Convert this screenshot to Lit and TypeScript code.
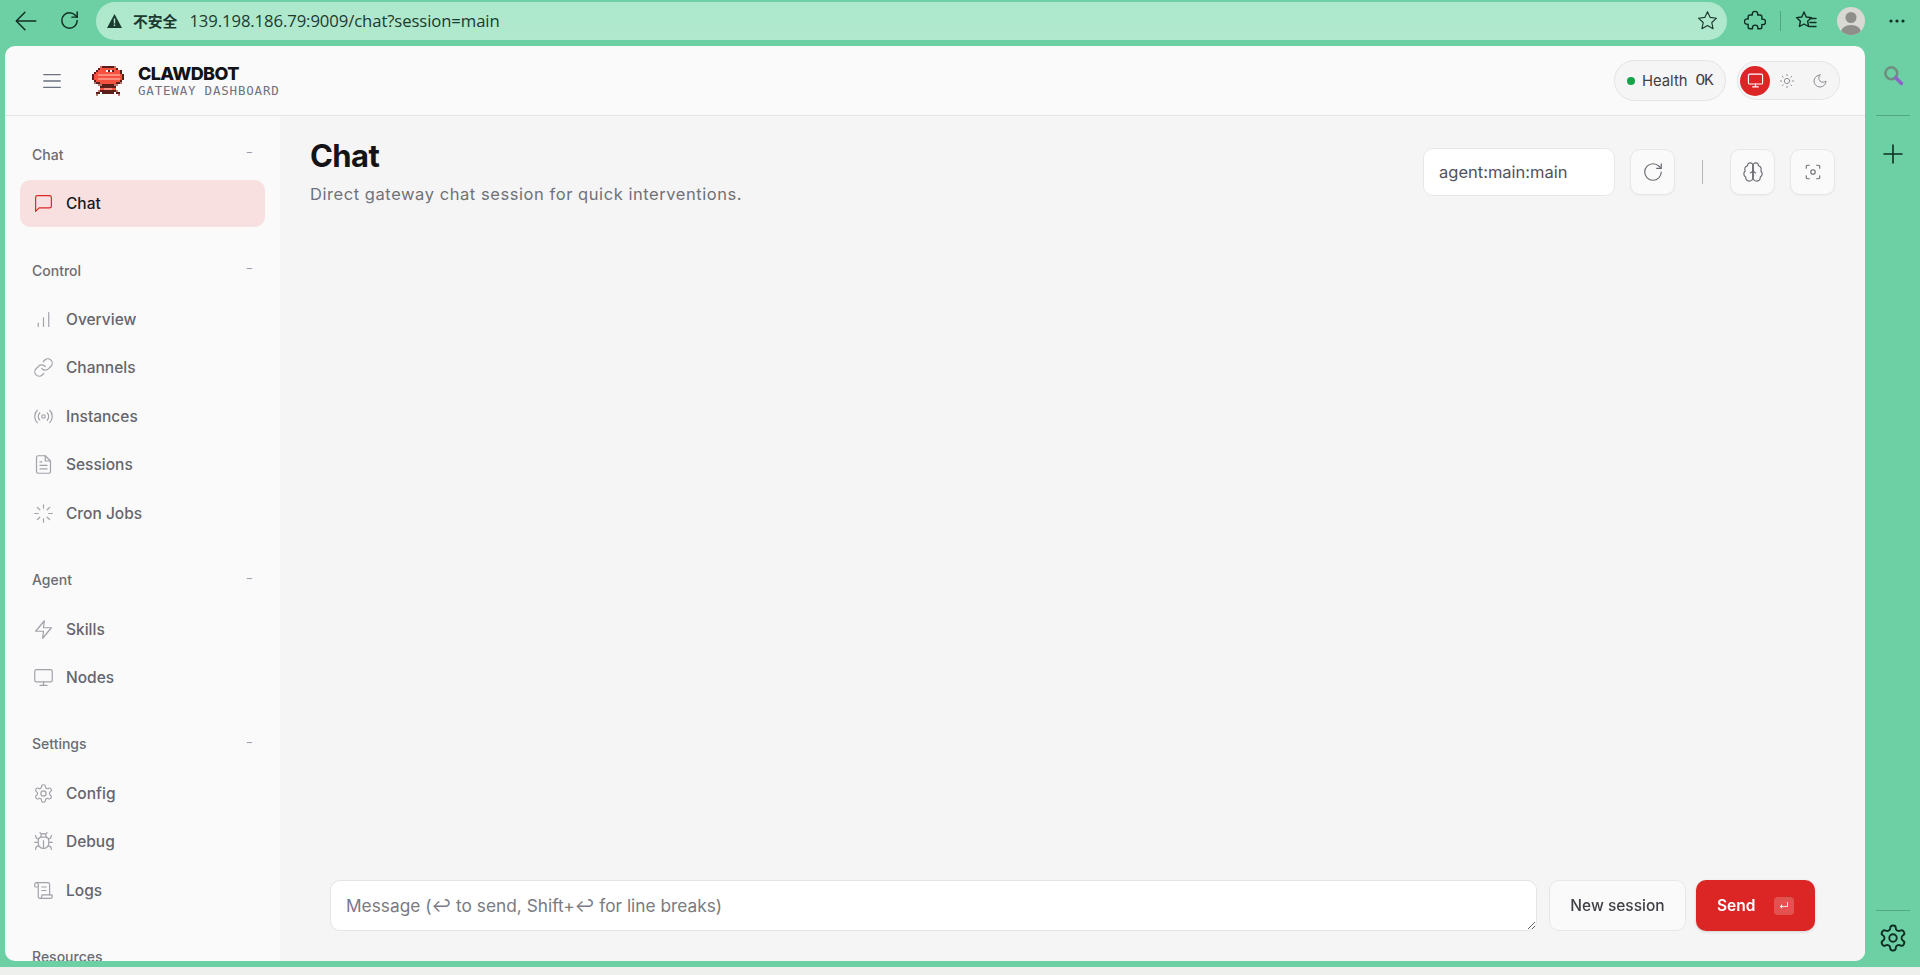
import { LitElement, html, css, svg } from "lit";
import { customElement } from "lit/decorators.js";

const ic = (body: unknown, size = 20, sw = 1.5) => html`<svg class="ic" width=${size} height=${size} viewBox="0 0 24 24" fill="none" stroke="currentColor" stroke-width=${sw} stroke-linecap="round" stroke-linejoin="round">${body}</svg>`;

const I: Record<string, unknown> = {
  chat: svg`<path d="M21 15a2 2 0 0 1-2 2H7l-4 4V5a2 2 0 0 1 2-2h14a2 2 0 0 1 2 2z"/>`,
  overview: svg`<path d="M18 20V4M12 20V10M6 20v-4"/>`,
  channels: svg`<path d="M10 13a5 5 0 0 0 7.54.54l3-3a5 5 0 0 0-7.07-7.07l-1.72 1.71"/><path d="M14 11a5 5 0 0 0-7.54-.54l-3 3a5 5 0 0 0 7.07 7.07l1.71-1.71"/>`,
  instances: svg`<path d="M4.9 19.1C1 15.2 1 8.8 4.9 4.9"/><path d="M7.8 16.2c-2.3-2.3-2.3-6.1 0-8.5"/><circle cx="12" cy="12" r="2"/><path d="M16.2 7.8c2.3 2.3 2.3 6.1 0 8.5"/><path d="M19.1 4.9C23 8.8 23 15.1 19.1 19"/>`,
  sessions: svg`<path d="M14 2H6a2 2 0 0 0-2 2v16a2 2 0 0 0 2 2h12a2 2 0 0 0 2-2V8z"/><path d="M14 2v6h6M16 13H8M16 17H8M10 9H8"/>`,
  cron: svg`<path d="M12 2v4M12 18v4M4.93 4.93l2.83 2.83M16.24 16.24l2.83 2.83M2 12h4M18 12h4M4.93 19.07l2.83-2.83M16.24 7.76l2.83-2.83"/>`,
  skills: svg`<polygon points="13 2 3 14 12 14 11 22 21 10 12 10 13 2"/>`,
  nodes: svg`<rect x="2" y="3" width="20" height="14" rx="2"/><path d="M8 21h8M12 17v4"/>`,
  config: svg`<path d="M12.22 2h-.44a2 2 0 0 0-2 2v.18a2 2 0 0 1-1 1.73l-.43.25a2 2 0 0 1-2 0l-.15-.08a2 2 0 0 0-2.73.73l-.22.38a2 2 0 0 0 .73 2.73l.15.1a2 2 0 0 1 1 1.72v.51a2 2 0 0 1-1 1.74l-.15.09a2 2 0 0 0-.73 2.73l.22.38a2 2 0 0 0 2.73.73l.15-.08a2 2 0 0 1 2 0l.43.25a2 2 0 0 1 1 1.73V20a2 2 0 0 0 2 2h.44a2 2 0 0 0 2-2v-.18a2 2 0 0 1 1-1.73l.43-.25a2 2 0 0 1 2 0l.15.08a2 2 0 0 0 2.73-.73l.22-.39a2 2 0 0 0-.73-2.73l-.15-.08a2 2 0 0 1-1-1.74v-.5a2 2 0 0 1 1-1.74l.15-.09a2 2 0 0 0 .73-2.73l-.22-.38a2 2 0 0 0-2.73-.73l-.15.08a2 2 0 0 1-2 0l-.43-.25a2 2 0 0 1-1-1.73V4a2 2 0 0 0-2-2z"/><circle cx="12" cy="12" r="3"/>`,
  debug: svg`<path d="m8 2 1.88 1.88M14.12 3.88 16 2M9 7.13v-1a3.003 3.003 0 1 1 6 0v1"/><path d="M12 20c-3.3 0-6-2.7-6-6v-3a4 4 0 0 1 4-4h4a4 4 0 0 1 4 4v3c0 3.3-2.7 6-6 6M12 20v-9M6.53 9C4.6 8.8 3 7.1 3 5M6 13H2M3 21c0-2.1 1.7-3.9 3.8-4M20.97 5c0 2.1-1.6 3.8-3.5 4M22 13h-4M17.2 17c2.1.1 3.8 1.9 3.8 4"/>`,
  logs: svg`<path d="M15 12h-5M15 8h-5M19 17V5a2 2 0 0 0-2-2H4"/><path d="M8 21h12a2 2 0 0 0 2-2v-1a1 1 0 0 0-1-1H11a1 1 0 0 0-1 1v1a2 2 0 1 1-4 0V5a2 2 0 1 0-4 0v2a1 1 0 0 0 1 1h3"/>`,
  refresh: svg`<path d="M21 12a9 9 0 1 1-9-9c2.52 0 4.93 1 6.74 2.74L21 8"/><path d="M21 3v5h-5"/>`,
  brain: svg`<path d="M12 5a3 3 0 1 0-5.997.125 4 4 0 0 0-2.526 5.77 4 4 0 0 0 .556 6.588A4 4 0 1 0 12 18Z"/><path d="M12 5a3 3 0 1 1 5.997.125 4 4 0 0 1 2.526 5.77 4 4 0 0 1-.556 6.588A4 4 0 1 1 12 18Z"/><path d="M15 13a4.5 4.5 0 0 1-3-4 4.5 4.5 0 0 1-3 4M12 5v13"/>`,
  focus: svg`<path d="M3 7V5a2 2 0 0 1 2-2h2M17 3h2a2 2 0 0 1 2 2v2M21 17v2a2 2 0 0 1-2 2h-2M7 21H5a2 2 0 0 1-2-2v-2"/><circle cx="12" cy="12" r="3"/>`,
  sun: svg`<circle cx="12" cy="12" r="4"/><path d="M12 2v2M12 20v2M4.93 4.93l1.41 1.41M17.66 17.66l1.41 1.41M2 12h2M20 12h2M6.34 17.66l-1.41 1.41M19.07 4.93l-1.41 1.41"/>`,
  moon: svg`<path d="M12 3a6 6 0 0 0 9 9 9 9 0 1 1-9-9Z"/>`,
  menu: svg`<path d="M3 5h18M3 12h18M3 19h18"/>`,
  back: svg`<path d="M21 12H3M11 4l-8 8 8 8"/>`,
  reload: svg`<path d="M20 12a8 8 0 1 1-8-8c2.4 0 4.5 1 6 2.6L20 8.5"/><path d="M20 3v5.5h-5.5"/>`,
  star: svg`<path d="M12 2.8l2.8 6 6.6.8-4.9 4.5 1.3 6.5L12 17.3l-5.8 3.3 1.3-6.5-4.9-4.5 6.6-.8z"/>`,
  ext: svg`<path d="M9 4.500a3 3 0 0 1 6 0c0 .4 0 .6-.1 1h2.600a2 2 0 0 1 2 2v2.700c.3-.1.6-.2 1-.2a3 3 0 0 1 0 6c-.4 0-.7 0-1-.2v2.700a2 2 0 0 1-2 2H15c.1-.3.2-.6.2-1a3 3 0 0 0-6 0c0 .4 0 .7.2 1H6.500a2 2 0 0 1-2-2v-3c-.3.1-.6.2-1 .2a3 3 0 0 1 0-6c.4 0 .7 0 1 .2V7.500a2 2 0 0 1 2-2h2.600C9 5.100 9 4.900 9 4.500z"/>`,
  favs: svg`<path d="M10 3l2.200 5 5.300.6-3.900 3.600 1 5.300L10 15l-4.600 2.500 1-5.300L2.500 8.600 7.800 8z"/><path d="M16 9.500h6M16 13.500h6M15.500 17.500h6.500"/>`,
  plus: svg`<path d="M12 3v18M3 12h18"/>`,
};

const LOGO = [
  "....nkkkkkkn....",
  "...krrrrrrrrk...",
  "..krrrrwkwkrrrk.",
  ".krrrrrrrrrrrrk.",
  "krrppppppppppprk",
  "krrrrrrrrrrrrrrk",
  "krrppppppppppprk",
  ".krrrrrrrrrrrrk.",
  ".nkkrrrrrrrrkkn.",
  "...nnkkkkkknn...",
  "....kkkkkkkk....",
  "....rrpppprr....",
  "...nkkkkkkkkn...",
  "..kk.kkkkkk.kk..",
  "..n..........n..",
];
const COL: Record<string, string> = { k: "#5a1f1a", n: "#b9776c", r: "#f4523f", p: "#fb8d7e", w: "#fff" };

type Item = { label: string; icon: string; active?: boolean };
const GROUPS: { title: string; clipped?: boolean; items: Item[] }[] = [
  { title: "Chat", items: [{ label: "Chat", icon: "chat", active: true }] },
  { title: "Control", items: [
    { label: "Overview", icon: "overview" }, { label: "Channels", icon: "channels" },
    { label: "Instances", icon: "instances" }, { label: "Sessions", icon: "sessions" },
    { label: "Cron Jobs", icon: "cron" } ] },
  { title: "Agent", items: [{ label: "Skills", icon: "skills" }, { label: "Nodes", icon: "nodes" }] },
  { title: "Settings", items: [{ label: "Config", icon: "config" }, { label: "Debug", icon: "debug" }, { label: "Logs", icon: "logs" }] },
  { title: "Resources", clipped: true, items: [] },
];

@customElement("app-root")
export class AppRoot extends LitElement {
  static styles = css`
    :host { display: flex; flex-direction: column; width: 1920px; height: 975px; overflow: hidden; background: #6dd0a4; font-family: Inter, "Noto Sans", sans-serif; color: #18181b; }
    * { box-sizing: border-box; }
    .ic { display: block; flex: none; }
    .chrome { height: 46px; flex: none; display: flex; align-items: center; padding: 0 13px 5px 13px; color: #0f2d22; font-family: "Open Sans", "Noto Sans CJK SC", sans-serif; }
    .nav { width: 45px; display: flex; justify-content: flex-start; }
    .addr { flex: 1; height: 38px; margin-left: -7px; border-radius: 19px; background: linear-gradient(#aee8cc, #b0e9ce); display: flex; align-items: center; padding: 0 8px 0 11px; font-size: 16.700px; color: #1c3a30; }
    .warn { margin-right: 11px; }
    .unsafe { font-size: 14.800px; font-weight: 700; margin-right: 12px; font-family: "Noto Sans CJK SC", sans-serif; }
    .url { flex: 1; letter-spacing: -.1px; }
    .tools { width: 180px; flex: none; display: flex; align-items: center; padding-left: 17px; }
    .sep { width: 1px; height: 20px; background: #4fa883; margin: 0 13px 0 14px; }
    .avatar { width: 28px; height: 28px; border-radius: 50%; background: #d9d9d4; margin-left: 19px; overflow: hidden; flex: none; }
    .dots { margin-left: 24px; display: block; flex: none; }
    .row { flex: 1; min-height: 0; display: flex; padding: 0 0 6px 5px; }
    .card { flex: 1; min-width: 0; background: #fafafa; border-radius: 10px; overflow: hidden; display: flex; flex-direction: column; }
    .top { height: 70px; flex: none; display: flex; align-items: center; border-bottom: 1px solid #e4e4e7; padding: 0 25px 0 36px; }
    .burger { color: #6b7280; width: 51px; }
    .logo { display: block; margin-right: 14px; flex: none; }
    .brand { flex: 1; display: flex; flex-direction: column; padding-top: 1px; }
    .brand b { font-size: 18px; line-height: 19px; font-weight: 800; letter-spacing: -.6px; color: #111318; }
    .brand span { font-family: "DejaVu Sans Mono", monospace; font-size: 12.500px; line-height: 14px; margin-top: 1px; letter-spacing: .8px; color: #71717a; }
    .pill { height: 41px; display: flex; align-items: center; border: 1px solid #e4e4e7; border-radius: 21px; background: #f5f5f5; }
    .health { width: 112px; padding-left: 12px; font-size: 14.800px; color: #3f3f46; }
    .dot { width: 8px; height: 8px; border-radius: 50%; background: #16a34a; margin-right: 7px; }
    .ok { font-family: "Liberation Mono", monospace; font-size: 16px; letter-spacing: -1px; margin-left: 8px; color: #3f3f46; }
    .theme { width: 103px; height: 39px; margin-left: 11px; padding: 0 2px 0 2px; color: #8b8b92; }
    .on { width: 30px; height: 30px; border-radius: 50%; background: #dc2626; color: #fff; display: flex; align-items: center; justify-content: center; flex: none; }
    .tb { width: 34px; display: flex; justify-content: center; }
    .body { flex: 1; min-height: 0; display: flex; }
    .side { width: 275px; flex: none; padding: 26px 15px 0 15px; overflow: hidden; }
    .group { margin-bottom: 31px; }
    .gl { height: 24px; margin-bottom: 14px; padding: 0 12px; display: flex; align-items: center; justify-content: space-between; font-size: 14px; color: #6b6b73; font-weight: 500; }
    .gl i { font-style: normal; font-size: 11px; color: #a1a1aa; transform: translateY(-2px); }
    .item { height: 47px; margin-bottom: 1.400px; border-radius: 10px; display: flex; align-items: center; padding: 0 13px; gap: 12px; font-size: 15.500px; font-weight: 500; color: #65656d; }
    .item .ic { color: #a1a1aa; }
    .item.active { background: #f8e0e1; color: #18181b; }
    .item.active .ic { color: #dc2626; }
    main { flex: 1; min-width: 0; background: #f5f5f5; display: flex; flex-direction: column; padding: 0 30px 30px 30px; }
    .head { display: flex; justify-content: space-between; padding-top: 19.500px; }
    h1 { margin: 0; font-size: 31px; line-height: 40px; font-weight: 700; letter-spacing: -.6px; color: #141418; }
    .head p { margin: 7px 0 0; font-size: 16.500px; line-height: 22px; color: #71717a; letter-spacing: .56px; }
    .acts { display: flex; align-items: center; margin-top: 12.500px; height: 48px; }
    .sess { width: 192px; height: 48px; background: #fff; border: 1px solid #e7e7ea; border-radius: 10px; display: flex; align-items: center; padding: 0 15px; font-size: 16.500px; color: #52525b; margin-right: 15px; }
    .ib { width: 45px; height: 46px; border: 1px solid #e7e7ea; border-radius: 10px; background: #fafafa; display: flex; align-items: center; justify-content: center; color: #6b6b73; box-shadow: 0 1px 2px rgba(0,0,0,.04); }
    .vr { width: 1px; height: 24px; background: #b4b4bb; margin: 0 27px; }
    .ib + .ib { margin-left: 15px; }
    .spacer { flex: 1; }
    .composer { display: flex; align-items: stretch; margin: 0 0 0 20px; padding-right: 20px; height: 51px; gap: 12px; }
    textarea { flex: 1; min-width: 0; height: 51px; resize: vertical; border: 1px solid #e4e4e7; border-radius: 10px; background: #fff; padding: 13px 15px; font: 17.300px/24px Inter, "Noto Sans", sans-serif; color: #18181b; outline: none; }
    textarea::placeholder { color: #7a7a82; opacity: 1; }
    .new { width: 137px; border: 1px solid #e7e7ea; border-radius: 10px; background: #fafafa; display: flex; align-items: center; justify-content: center; font-size: 15.500px; font-weight: 500; color: #3f3f46; }
    .send { width: 119px; margin-left: -2px; border-radius: 10px; background: #dc2626; color: #fff; display: flex; align-items: center; padding: 0 21px; justify-content: space-between; font-size: 15.500px; font-weight: 600; box-shadow: 0 1px 3px rgba(0,0,0,.15); }
    .kbd { width: 20px; height: 18px; border-radius: 4px; background: rgba(255,255,255,.2); font-size: 10px; font-weight: 400; display: flex; align-items: center; justify-content: center; }
    .rail { width: 55px; flex: none; display: flex; flex-direction: column; align-items: center; color: #0f2d22; padding-top: 18px; }
    .rule { width: 34px; height: 1px; background: #4fa883; flex: none; }
    .rail .rule.a { margin: 29px 0 26px; }
    .rail .grow { flex: 1; }
    .rail .rule.b { margin-bottom: 12px; }
    .railEnd { height: 8px; flex: none; }
    .strip { height: 8px; flex: none; background: #eef0ee; }
  `;

  private logo() {
    return html`<svg class="logo" width="32" height="30" viewBox="0 0 16 15" shape-rendering="crispEdges">
      ${LOGO.flatMap((r, y) => [...r].map((c, x) => COL[c] ? svg`<rect x=${x} y=${y} width="1" height="1" fill=${COL[c]}/>` : null))}
    </svg>`;
  }

  render() {
    return html`
      <div class="chrome">
        <div class="nav">${ic(I.back, 26, 1.4)}</div>
        <div class="nav">${ic(I.reload, 23, 1.5)}</div>
        <div class="addr">
          <svg class="warn" width="15" height="14" viewBox="0 0 15 14"><path d="M7.500 0 15 14H0z" fill="#1c3a30"/><rect x="6.800" y="4.500" width="1.400" height="5" fill="#aee8cc"/><rect x="6.800" y="10.500" width="1.400" height="1.500" fill="#aee8cc"/></svg>
          <span class="unsafe">不安全</span>
          <span class="url">139.198.186.79:9009/chat?session=main</span>
          ${ic(I.star, 23, 1.2)}
        </div>
        <div class="tools">
          ${ic(I.ext, 22, 1.5)}
          <span class="sep"></span>
          ${ic(I.favs, 24, 1.4)}
          <div class="avatar"><svg width="28" height="28" viewBox="0 0 28 28"><circle cx="14" cy="10.500" r="5.500" fill="#8e8e8a"/><ellipse cx="14" cy="25" rx="10" ry="7" fill="#8e8e8a"/></svg></div>
          <svg class="dots" width="16" height="4" viewBox="0 0 16 4" fill="#0f2d22"><circle cx="2" cy="2" r="1.600"/><circle cx="8" cy="2" r="1.600"/><circle cx="14" cy="2" r="1.600"/></svg>
        </div>
      </div>
      <div class="row">
        <div class="card">
          <div class="top">
            <div class="burger">${ic(I.menu, 22, 1.4)}</div>
            ${this.logo()}
            <div class="brand"><b>CLAWDBOT</b><span>GATEWAY DASHBOARD</span></div>
            <div class="pill health"><span class="dot"></span>Health<span class="ok">OK</span></div>
            <div class="pill theme">
              <span class="on">${ic(I.nodes, 17, 1.6)}</span>
              <span class="tb">${ic(I.sun, 16, 1.4)}</span>
              <span class="tb">${ic(I.moon, 16, 1.5)}</span>
            </div>
          </div>
          <div class="body">
            <nav class="side">
              ${GROUPS.map(g => html`<div class="group">
                <div class="gl"><span>${g.title}</span>${g.clipped ? null : html`<i>−</i>`}</div>
                ${g.items.map(it => html`<div class="item ${it.active ? "active" : ""}">${ic(I[it.icon], 21, 1.35)}<span>${it.label}</span></div>`)}
              </div>`)}
            </nav>
            <main>
              <div class="head">
                <div><h1>Chat</h1><p>Direct gateway chat session for quick interventions.</p></div>
                <div class="acts">
                  <div class="sess">agent:main:main</div>
                  <div class="ib">${ic(I.refresh, 22, 1.3)}</div>
                  <span class="vr"></span>
                  <div class="ib">${ic(I.brain, 22, 1.25)}</div>
                  <div class="ib">${ic(I.focus, 18, 1.5)}</div>
                </div>
              </div>
              <div class="spacer"></div>
              <div class="composer">
                <textarea placeholder="Message (↩ to send, Shift+↩ for line breaks)"></textarea>
                <div class="new">New session</div>
                <div class="send">Send<span class="kbd">↵</span></div>
              </div>
            </main>
          </div>
        </div>
        <aside class="rail">
          <svg width="22" height="22" viewBox="0 0 26 26" fill="none"><circle cx="11" cy="11" r="7" stroke="#6f8f80" stroke-width="3"/><path d="M16 16l7 7" stroke="#8b63c9" stroke-width="4" stroke-linecap="round"/></svg>
          <span class="rule a"></span>
          ${ic(I.plus, 24, 1.6)}
          <span class="grow"></span>
          <span class="rule b"></span>
          ${ic(I.config, 30, 1.5)}
          <div class="railEnd"></div>
        </aside>
      </div>
      <div class="strip"></div>
    `;
  }
}
